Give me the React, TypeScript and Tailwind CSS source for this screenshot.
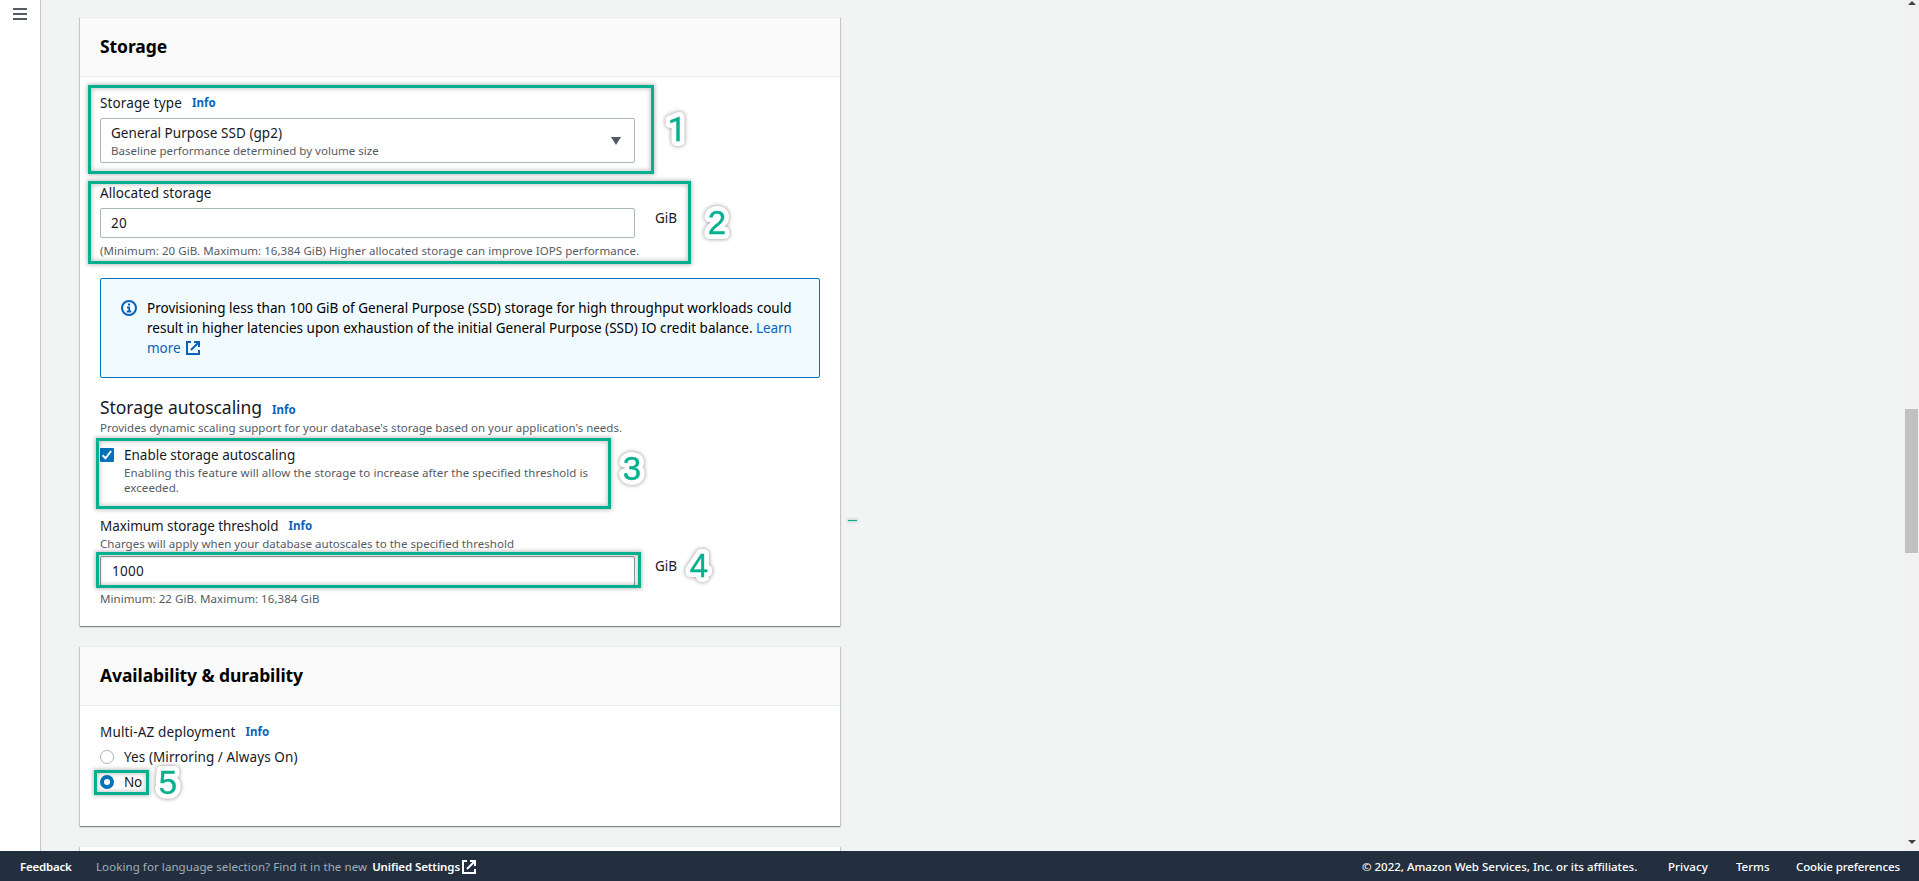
import type { ReactNode } from "react";

function Title({ children, className }: { children: ReactNode; className: string }) {
  return (
    <header className="flex h-[59px] shrink-0 items-start border-b border-[#eaeded] bg-[#fafafa] px-5 pt-[17px]">
      <h2 className={`whitespace-nowrap text-[17.5px] leading-[22px] font-bold ${className}`}>{children}</h2>
    </header>
  );
}

function Card({ children, className }: { children?: ReactNode; className: string }) {
  return (
    <section
      className={`flex w-[760px] shrink-0 flex-col border-t border-[#eaeded] bg-white shadow-[0_1px_1px_0_rgba(0,28,36,0.3),1px_1px_1px_0_rgba(0,28,36,0.15),-1px_1px_1px_0_rgba(0,28,36,0.15)] ${className}`}
    >
      {children}
    </section>
  );
}

function Info({ className = "" }: { className?: string }) {
  return (
    <a className={`text-[11.5px] font-bold tracking-[0.05px] text-[#0a62b8] ${className}`}>Info</a>
  );
}

function Note({ children, className }: { children: ReactNode; className: string }) {
  return <p className={`h-4 whitespace-nowrap text-[11.5px] leading-4 text-[#545b64] ${className}`}>{children}</p>;
}

function ExternalIcon({ className }: { className: string }) {
  return (
    <svg viewBox="0 0 14 14" className={`h-[14px] w-[14px] ${className}`} fill="none" stroke="currentColor" strokeWidth="2">
      <path d="M5 1H1v12h12V9" />
      <path d="M8 1h5v5M13 1 5 9" />
    </svg>
  );
}

function Outline({ className }: { className: string }) {
  return (
    <div
      className={`pointer-events-none absolute border-[3px] border-[#06b08f] shadow-[0_0_4px_1px_rgba(0,0,0,0.25),inset_0_0_4px_1px_rgba(0,0,0,0.22)] ${className}`}
    />
  );
}

function Step({ n, className, x = 24, font = "'Liberation Sans', sans-serif" }: { n: number; className: string; x?: number; font?: string }) {
  return (
    <svg
      viewBox="0 0 48 48"
      className={`pointer-events-none absolute h-12 w-12 [filter:drop-shadow(0_0_2px_rgba(0,0,0,0.45))] ${className}`}
    >
      <text
        x={x}
        y="36"
        textAnchor="middle"
        fontFamily={font}
        fontSize="33"
        fill="#ffffff"
        stroke="#ffffff"
        strokeWidth="10"
        strokeLinejoin="round"
        aria-hidden="true"
      >
        {n}
      </text>
      <text
        x={x}
        y="36"
        textAnchor="middle"
        fontFamily={font}
        fontSize="33"
        fill="#06b08f"
        stroke="#06b08f"
        strokeWidth="0.4"
      >
        {n}
      </text>
    </svg>
  );
}

export default function App() {
  return (
    <div className="relative flex h-[881px] w-full flex-col overflow-hidden bg-[#f2f3f3] font-['Noto_Sans',sans-serif] text-[13.5px] text-[#16191f]">
      <div className="flex h-[851px] shrink-0 overflow-hidden">
        <nav className="w-[41px] shrink-0 border-r border-[#c4c8c8] bg-white pt-2 pl-[13px]">
          <svg viewBox="0 0 14 12" className="h-3 w-[14px]" fill="#545b64">
            <path d="M0 0h14v2H0zM0 5h14v2H0zM0 10h14v2H0z" />
          </svg>
        </nav>

        <main className="flex flex-1 flex-col pt-[17px] pl-[39px]">
          <Card className="h-[609px]">
            <Title className="tracking-[-0.09px] text-black">Storage</Title>
            <div className="flex flex-col px-5 pt-[15px]">
              <div className="flex h-[22px] items-center gap-[10px] whitespace-nowrap leading-[22px]">
                <span className="tracking-[0.12px]">Storage type</span>
                <Info />
              </div>
              <div className="mt-[4px] flex h-[45px] w-[535px] items-center justify-between rounded-[2px] border border-[#aab7b8] bg-white pr-[13px] pl-[10px]">
                <div className="flex flex-col whitespace-nowrap pt-px">
                  <span className="h-5 leading-5 tracking-[0.04px]">General Purpose SSD (gp2)</span>
                  <Note className="tracking-[0.01px]">Baseline performance determined by volume size</Note>
                </div>
                <svg viewBox="0 0 10 8" className="h-2 w-[10px]" fill="#545b64">
                  <path d="M0 0h10L5 8z" />
                </svg>
              </div>

              <div className="mt-[19px] h-[22px] whitespace-nowrap leading-[22px] tracking-[0.06px]">Allocated storage</div>
              <div className="mt-1 flex h-[30px] gap-[20px]">
                <div className="flex w-[535px] items-center rounded-[2px] border border-[#aab7b8] bg-white pl-[10px] tracking-[0.3px]">20</div>
                <span className="h-5 leading-5">GiB</span>
              </div>
              <Note className="mt-[5px] tracking-[0.04px]">
                (Minimum: 20 GiB. Maximum: 16,384 GiB) Higher allocated storage can improve IOPS performance.
              </Note>

              <div className="mt-[19px] flex h-[100px] w-[720px] gap-[10px] rounded-[2px] border border-[#0073bb] bg-[#f1faff] pt-[19px] pl-5 text-black">
                <svg viewBox="0 0 16 16" className="mt-[2px] h-4 w-4 shrink-0" fill="none" stroke="#0a62b8">
                  <circle cx="8" cy="8" r="7" strokeWidth="2" />
                  <path d="M7 4.5h2M6 7.5h2.2v4M5.8 11.5h4.5" strokeWidth="1.8" />
                </svg>
                <div className="flex flex-col whitespace-nowrap leading-5">
                  <span className="tracking-[0.02px]">
                    Provisioning less than 100 GiB of General Purpose (SSD) storage for high throughput workloads could
                  </span>
                  <span>
                    result in higher latencies upon exhaustion of the initial General Purpose (SSD) IO credit balance.{" "}
                    <a className="tracking-[-0.1px] text-[#0a62b8]">Learn</a>
                  </span>
                  <a className="flex text-[#0a62b8] tracking-[-0.05px]">
                    more
                    <ExternalIcon className="mt-[3px] ml-[5px]" />
                  </a>
                </div>
              </div>

              <div className="mt-[18px] flex h-[22px] items-baseline gap-[10px] whitespace-nowrap leading-[22px]">
                <span className="text-[17.5px] tracking-[-0.06px]">Storage autoscaling</span>
                <Info />
              </div>
              <Note className="mt-[2px] tracking-[0.01px]">
                Provides dynamic scaling support for your database's storage based on your application's needs.
              </Note>
              <div className="mt-[8px] flex h-[57px] gap-[10px]">
                <svg viewBox="0 0 14 14" className="mt-1 h-[14px] w-[14px] shrink-0">
                  <rect width="14" height="14" rx="1" fill="#0073bb" />
                  <path d="m2.5 7.3 3 3 5.6-7.3" fill="none" stroke="white" strokeWidth="2" />
                </svg>
                <div className="flex flex-col whitespace-nowrap pt-px">
                  <span className="h-5 leading-[21px]">Enable storage autoscaling</span>
                  <span className="text-[11.5px] leading-[15px] tracking-[0.07px] text-[#545b64]">
                    Enabling this feature will allow the storage to increase after the specified threshold is
                    <br />
                    exceeded.
                  </span>
                </div>
              </div>

              <div className="mt-[14px] flex h-[22px] items-center gap-[10px] whitespace-nowrap leading-[22px]">
                <span className="tracking-[-0.07px]">Maximum storage threshold</span>
                <Info />
              </div>
              <Note className="-mt-px tracking-[0.03px]">
                Charges will apply when your database autoscales to the specified threshold
              </Note>
              <div className="mt-[4px] flex h-[30px] gap-[20px]">
                <div className="flex w-[535px] items-center rounded-[2px] border border-[#8b9696] bg-white pl-[11px] tracking-[0.3px]">1000</div>
                <span className="h-[21px] leading-[21px]">GiB</span>
              </div>
              <Note className="mt-[5px] tracking-[0.055px]">Minimum: 22 GiB. Maximum: 16,384 GiB</Note>
            </div>
          </Card>

          <Card className="mt-[20px] h-[180px]">
            <Title className="tracking-[-0.07px] text-black">Availability &amp; durability</Title>
            <div className="flex flex-col px-5 pt-[15px]">
              <div className="flex h-[22px] items-center gap-[10px] whitespace-nowrap leading-[22px]">
                <span className="tracking-[0.15px]">Multi-AZ deployment</span>
                <Info />
              </div>
              <label className="mt-[4px] flex h-[20px] items-center gap-[10px] whitespace-nowrap">
                <span className="h-[14px] w-[14px] rounded-full border border-[#aab7b8] bg-white" />
                <span className="leading-5 tracking-[0.085px]">Yes (Mirroring / Always On)</span>
              </label>
              <label className="mt-[5px] flex h-[20px] items-center gap-[10px] whitespace-nowrap">
                <span className="h-[14px] w-[14px] rounded-full border-[4px] border-[#0073bb] bg-white" />
                <span className="leading-5 tracking-[-0.2px]">No</span>
              </label>
            </div>
          </Card>

          <Card className="mt-[20px] h-[58px]" />
        </main>

        <div className="flex w-[15px] shrink-0 flex-col items-center bg-[#f1f1f1] pt-px pb-[7px]">
          <svg viewBox="0 0 8 4" className="h-1 w-2" fill="#404040">
            <path d="M0 4h8L4 0z" />
          </svg>
          <div className="mt-[404px] h-[144px] w-[13px] bg-[#c1c1c1]" />
          <svg viewBox="0 0 8 4" className="mt-auto h-1 w-2" fill="#404040">
            <path d="M0 0h8L4 4z" />
          </svg>
        </div>
      </div>

      <footer className="flex h-[30px] shrink-0 items-center whitespace-nowrap bg-[#232f3e] pt-[2px] pl-[20px] text-[11.5px] text-white">
        <a className="w-[76px] font-semibold tracking-[-0.22px]">Feedback</a>
        <span className="tracking-[0.08px] text-[#a4aeb3]">Looking for language selection? Find it in the new</span>
        <a className="ml-[5px] flex items-center font-semibold tracking-[-0.1px]">
          Unified Settings
          <ExternalIcon className="ml-[2px]" />
        </a>
        <div className="ml-auto flex pr-[19px]">
          <span className="w-[306px] font-medium">© 2022, Amazon Web Services, Inc. or its affiliates.</span>
          <a className="w-[68px] font-medium tracking-[0.09px]">Privacy</a>
          <a className="w-[60px] font-medium">Terms</a>
          <a className="font-medium tracking-[-0.1px]">Cookie preferences</a>
        </div>
      </footer>

      <Outline className="top-[85px] left-[88px] h-[89px] w-[566px]" />
      <Outline className="top-[181px] left-[88px] h-[83px] w-[603px]" />
      <Outline className="top-[438px] left-[96px] h-[71px] w-[515px]" />
      <Outline className="top-[552px] left-[96px] h-[36px] w-[545px]" />
      <Outline className="top-[770px] left-[94px] h-[25px] w-[55px]" />
      <Step n={1} x={26} font="Roboto, sans-serif" className="top-[105px] left-[651px]" />
      <Step n={2} className="top-[198px] left-[692.5px]" />
      <Step n={3} className="top-[443.5px] left-[607.5px]" />
      <Step n={4} className="top-[540.5px] left-[674.5px]" />
      <Step n={5} className="top-[757.5px] left-[144.3px]" />
      <div className="absolute top-[520px] left-[848px] h-px w-[9px] bg-[#06b08f] shadow-[0_0_3px_1px_rgba(0,0,0,0.15)]" />
    </div>
  );
}
